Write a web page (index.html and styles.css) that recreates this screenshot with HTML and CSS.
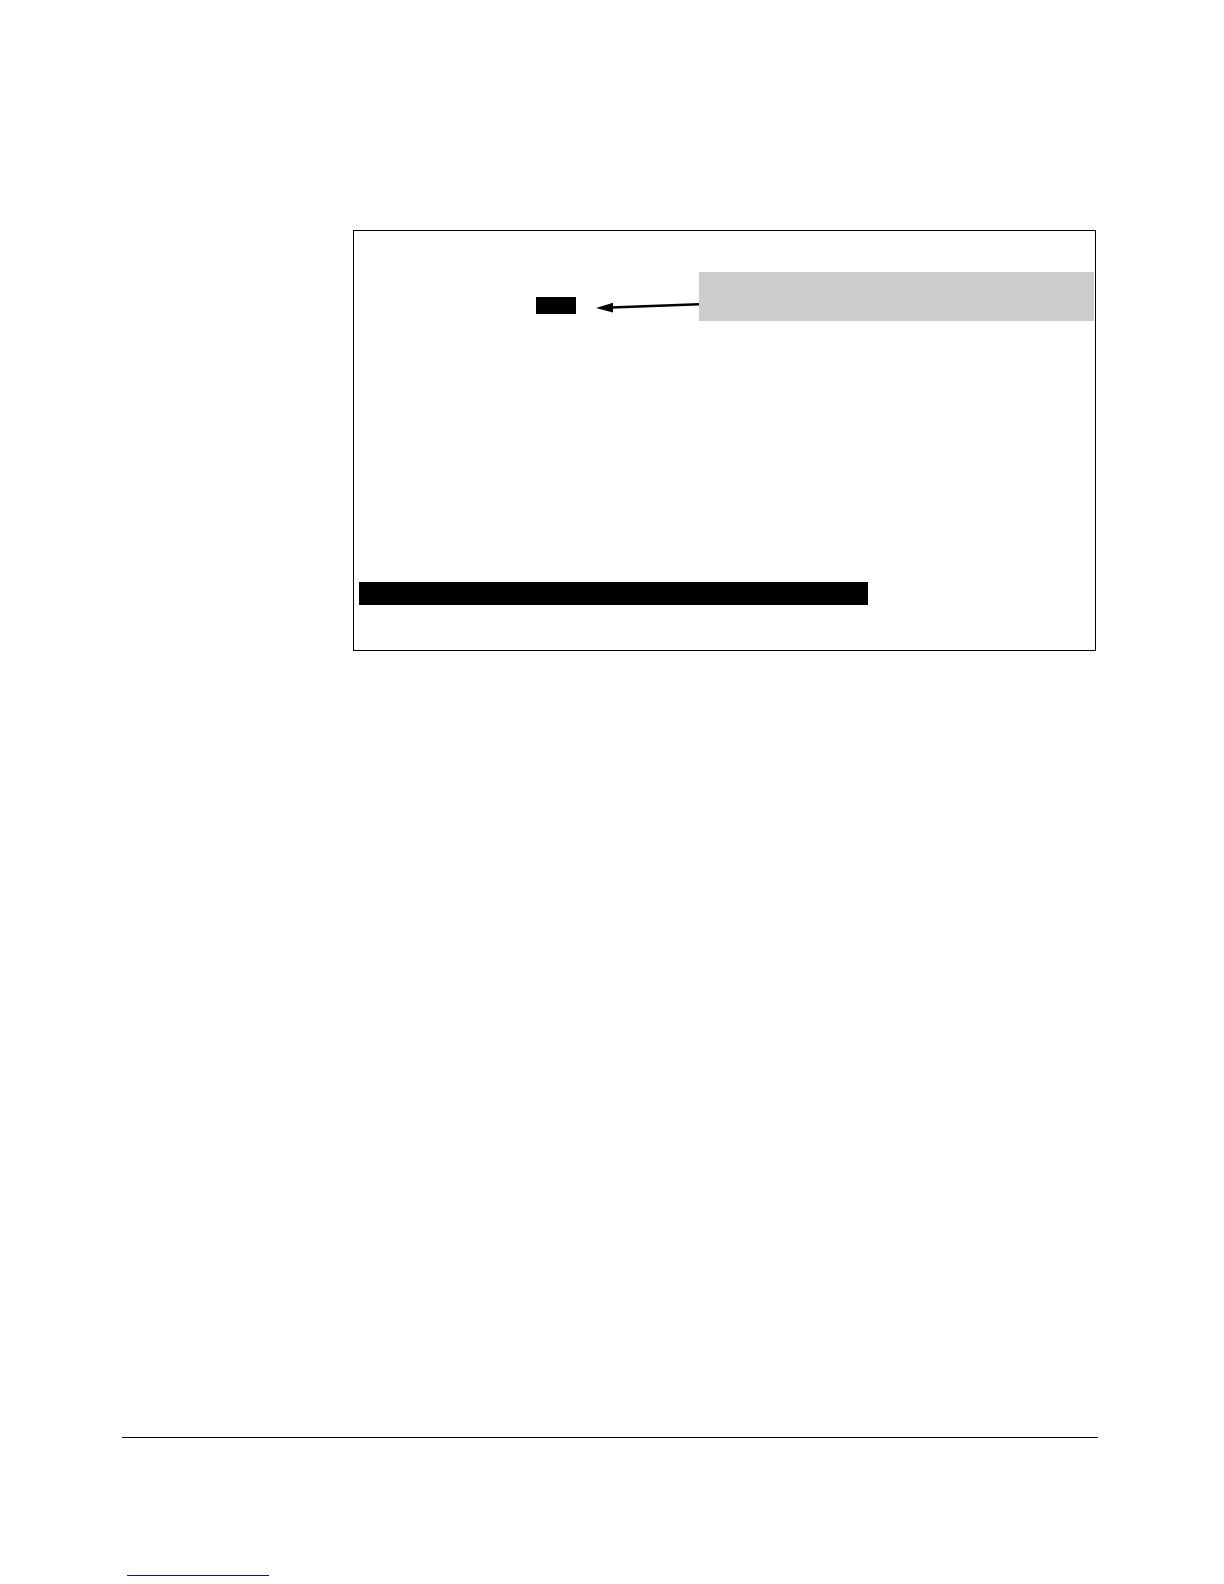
FILE: index.html
```
<!DOCTYPE html>
<html lang="en">
  <head>
    <meta charset="utf-8">
    <link rel="stylesheet" href="styles.css">
  </head>
  <body>
    <main>
      <section class="screen">
        <div class="callout">
          <div class="field"></div>
          <svg class="arrow" width="103" height="49" viewBox="0 0 103 49" aria-hidden="true">
            <path d="M15 35.5L103 32.2" stroke="#000" stroke-width="2.6"/>
            <path d="M0 36L17 30.800V40.600Z"/>
          </svg>
          <div class="note"></div>
        </div>
        <div class="status"></div>
      </section>
    </main>
    <footer>
      <a class="link" href="#"></a>
    </footer>
  </body>
</html>
```

FILE: styles.css
```
body {
	margin: 0;
	background: #fff;
	font-family: "Liberation Sans", Arial, sans-serif;
	}

main {
	padding: 230px 128px 0 353px;
	}

.screen {
	padding: 41px 1px 45px 5px;
	border: 1px solid #000;
	}

/* Highlighted field with its arrow and note */
.callout {
	display: flex;
	margin-left: 177px;
	}

.field {
	align-self: flex-end;
	width: 40px;
	height: 17px;
	margin: 0 20px 7px 0;
	background: #000;
	}

.arrow {
	flex: none;
	}

.note {
	flex: 1;
	background: #ccc;
	}

.status {
	width: 509px;
	max-width: 100%;
	height: 23px;
	margin-top: 261px;
	background: #000;
	}

footer {
	margin: 786px 126px 0 122px;
	padding: 137px 5px 8px;
	border-top: 1px solid #000;
	}

.link {
	display: block;
	width: 142px;
	border-bottom: 1px solid #10109c;
	}
```
